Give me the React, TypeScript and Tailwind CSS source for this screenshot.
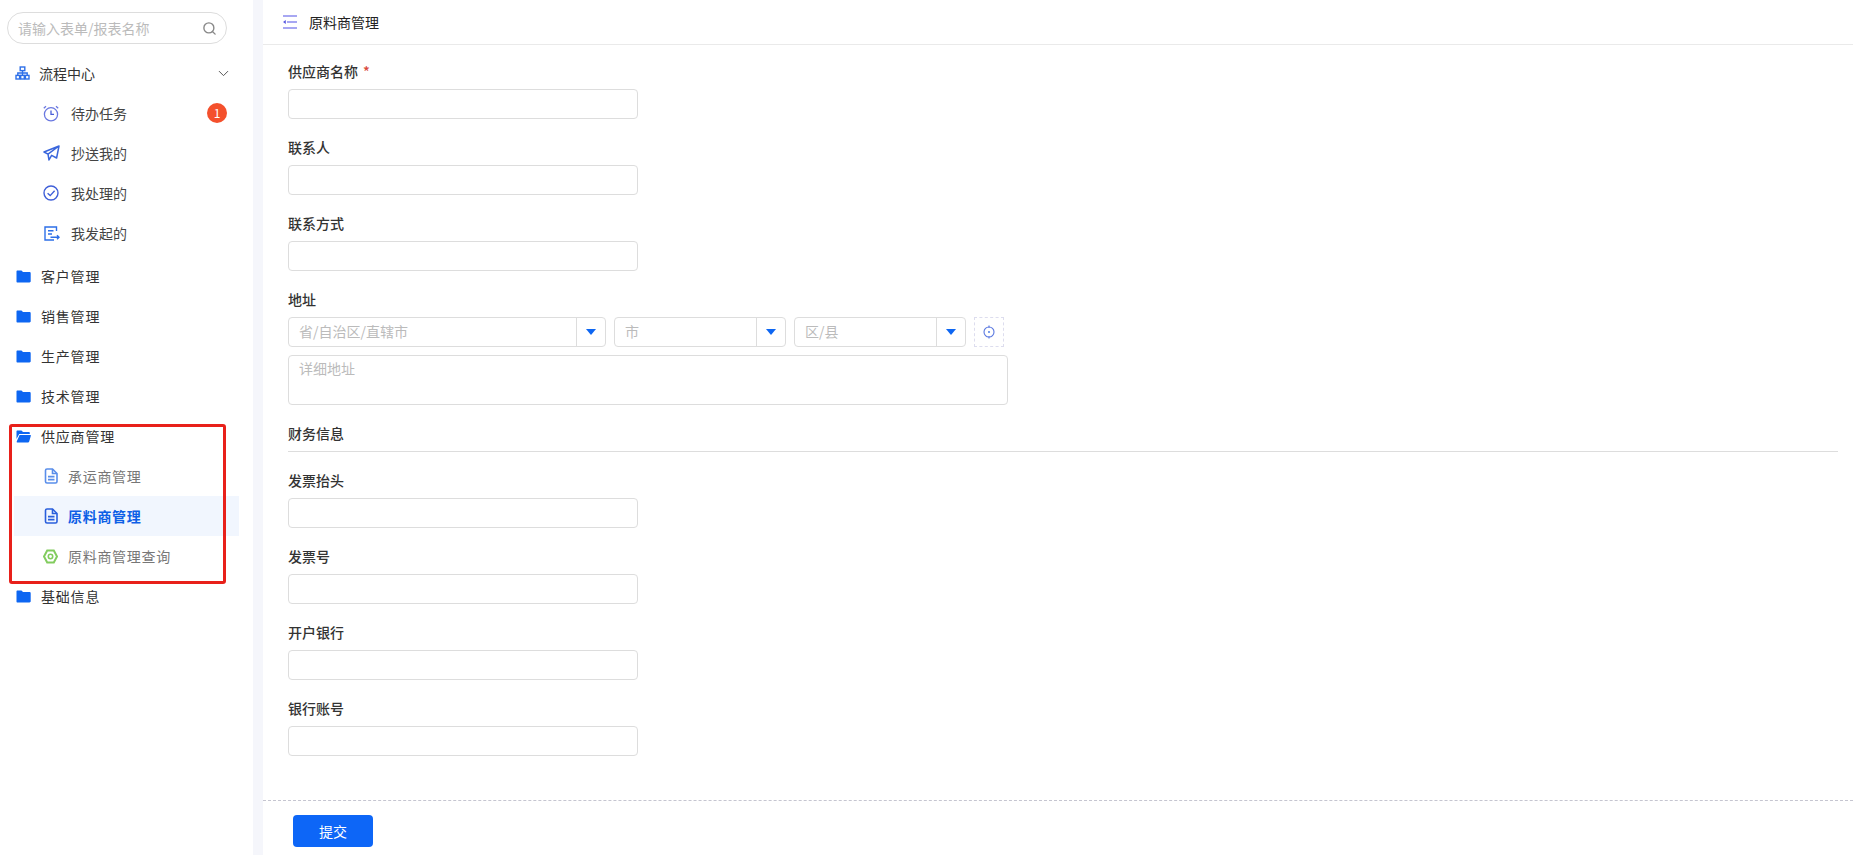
import { ChevronDown, Search } from 'lucide-react';
import type { ReactNode } from 'react';

const font = { fontFamily: '"Noto Sans CJK SC", "Liberation Sans", sans-serif' };

const FolderIcon = () => (
  <svg width="15" height="13" viewBox="0 0 15 13" className="shrink-0">
    <path d="M0.5 1.5C0.5 .9 .9 .5 1.5 .5H5.5L7 2H13.5C14.2 2 14.7 2.5 14.7 3.2V11.3C14.7 12 14.2 12.5 13.5 12.5H1.5C.9 12.5 .5 12 .5 11.4Z" fill="#0d66f2" />
  </svg>
);

const FolderOpenIcon = () => (
  <svg width="15" height="13" viewBox="0 0 15 13" className="shrink-0">
    <path d="M0.5 1.5C0.5 .9 .9 .5 1.5 .5H5.5L7 2H12.8C13.4 2 13.8 2.4 13.8 3V4H3.2L.5 9Z" fill="#0d66f2" />
    <path d="M3.6 5H14.2C14.8 5 15 5.4 14.8 5.9L13.2 11.6C13 12.2 12.6 12.5 12 12.5H1.2C.7 12.5 .5 12.2 .7 11.6Z" fill="#0d66f2" />
  </svg>
);

const OrgIcon = () => (
  <svg width="15" height="14" viewBox="0 0 15 14" fill="none" stroke="#2d6fe8" strokeWidth="1.4" className="shrink-0 -ml-px">
    <rect x="5.2" y="1" width="4.6" height="3.6" />
    <rect x="1" y="9.4" width="3.6" height="3.6" />
    <rect x="5.7" y="9.4" width="3.6" height="3.6" />
    <rect x="10.4" y="9.4" width="3.6" height="3.6" />
    <path d="M7.5 4.6V9.4M2.8 9.4V7H12.2V9.4" />
  </svg>
);

const ClockIcon = () => (
  <svg width="16" height="17" viewBox="0 0 16 17" fill="none" stroke="#6a78e0" strokeWidth="1.3" className="shrink-0">
    <circle cx="8" cy="9.3" r="6.6" />
    <path d="M8 5.6V9.4H11" stroke="#4a5fd8" strokeWidth="1.3" />
    <path d="M.8 3.2L3 1.2M15.2 3.2L13 1.2" />
  </svg>
);

const SendIcon = () => (
  <svg width="17" height="16" viewBox="0 0 17 16" fill="none" stroke="#3a66dc" strokeWidth="1.5" strokeLinejoin="round" className="shrink-0">
    <path d="M16 1L1 7L5 9.2L16 1L13.6 13L8.6 10.4L6 15L5 9.2" />
  </svg>
);

const CheckCircleIcon = () => (
  <svg width="16" height="16" viewBox="0 0 16 16" fill="none" stroke="#3f5fd8" strokeWidth="1.4" className="shrink-0">
    <circle cx="8" cy="8" r="7" />
    <path d="M4.6 8.2L7.2 10.6L11.6 5.8" />
  </svg>
);

const ListOutIcon = () => (
  <svg width="16" height="15" viewBox="0 0 16 15" fill="none" stroke="#2d6fe8" strokeWidth="1.4" className="shrink-0 ml-px">
    <path d="M12.5 5V1H1V14H10" />
    <path d="M4 4.8H9.5M4 8H8M6.5 11.3H15M13 9.3L15 11.3L13 13.3" />
  </svg>
);

const DocIcon = ({ dark }: { dark?: boolean }) => (
  <svg width="14" height="16" viewBox="0 0 14 16" fill="none" stroke={dark ? '#2a5fdc' : '#5a8eea'} strokeWidth="1.6" className="shrink-0">
    <path d="M1.5 2.5C1.5 1.5 2 1 3 1H8.5L13 5.5V13.5C13 14.5 12.5 15 11.5 15H3C2 15 1.5 14.5 1.5 13.5Z" />
    <path d="M8.5 1V5.5H13M4 8.6H10.5M4 11.6H10.5" />
  </svg>
);

const HexIcon = () => (
  <svg width="15" height="15" viewBox="0 0 15 15" fill="none" stroke="#82cc5e" strokeWidth="2" className="shrink-0 -ml-px">
    <path d="M4.2 1.5H10.8L14 7.5L10.8 13.5H4.2L1 7.5Z" />
    <circle cx="7.5" cy="7.5" r="2.2" strokeWidth="1.6" />
  </svg>
);

const MenuFoldIcon = () => (
  <svg width="14" height="14" viewBox="0 0 14 14" fill="none" stroke="#8b8bee" strokeWidth="1.4">
    <path d="M0 1H14M4 7H14M0 13H14" />
    <path d="M2.8 5L0 7L2.8 9Z" fill="#5a5ae0" stroke="none" />
  </svg>
);

const LocateIcon = () => (
  <svg width="14" height="16" viewBox="0 0 14 16" fill="none" stroke="#5a78e0" strokeWidth="1.1">
    <circle cx="7" cy="8" r="5" />
    <circle cx="7" cy="8" r="0.9" fill="#3f6fe0" stroke="none" />
    <path d="M7 1.5V3.8M7 12.2V14.5" />
  </svg>
);

const Top = ({ icon, label, open, wide }: { icon: ReactNode; label: string; open?: boolean; wide?: boolean }) => (
  <div className={`h-10 flex items-center pl-4 text-sm text-[#333] ${wide ? 'tracking-[0.8px]' : ''}`}>
    <span className={`${wide ? 'w-[25px]' : 'w-[23px]'} shrink-0 flex`}>{icon}</span>
    {label}
    {open && <ChevronDown className="ml-auto mr-[21px] text-[#555]" size={17} strokeWidth={1.4} />}
  </div>
);

const Task = ({ icon, label, badge }: { icon: ReactNode; label: string; badge?: number }) => (
  <div className="h-10 flex items-center pl-[43px] text-sm text-[#444]">
    <span className="w-7 shrink-0 flex">{icon}</span>
    {label}
    {badge && (
      <span className="ml-auto mr-[26px] w-5 h-5 rounded-full bg-[#f4502c] text-white text-xs flex items-center justify-center">
        {badge}
      </span>
    )}
  </div>
);

const Leaf = ({ icon, label, active }: { icon: ReactNode; label: string; active?: boolean }) => (
  <div
    className={`h-10 ml-[14px] w-[225px] flex items-center pl-[30px] text-sm tracking-[0.7px] ${
      active ? 'bg-[#f1f6fe] text-[#0d5fe6] font-bold' : 'text-[#777]'
    }`}
  >
    <span className="w-[24px] shrink-0 flex">{icon}</span>
    {label}
  </div>
);

const Field = ({ label, required }: { label: string; required?: boolean }) => (
  <div className="mb-[18px]">
    <div className="h-5 leading-5 mb-2 text-sm font-medium text-[#333]">
      {label}
      {required && <span className="ml-[5px] text-[#d9493a]">*</span>}
    </div>
    <div className="w-[350px] h-[30px] border border-[#ddd] rounded-sm bg-white" />
  </div>
);

const Select = ({ placeholder, width }: { placeholder: string; width: string }) => (
  <div className={`${width} h-[30px] border border-[#ddd] rounded-sm flex items-center`}>
    <span className="flex-1 pl-[10px] pb-[2px] text-sm text-[#bbb]">{placeholder}</span>
    <span className="w-[29px] h-full border-l border-[#ddd] flex items-center justify-center">
      <span className="w-0 h-0 border-x-[5px] border-x-transparent border-t-[6px] border-t-[#0d66f2]" />
    </span>
  </div>
);

export default function App() {
  return (
    <div className="w-[1853px] h-[855px] overflow-hidden flex bg-[#f5f6fb]" style={font}>
      <aside className="w-[253px] h-full bg-white shrink-0 relative">
        <div className="mt-3 ml-[7px] w-[220px] h-[32px] border border-[#ddd] rounded-full flex items-center pl-[10px] pr-[9px] text-sm text-[#bbb]">
          请输入表单/报表名称
          <Search className="ml-auto text-[#888]" size={15} strokeWidth={2.2} />
        </div>
        <div className="mt-[9px]">
          <Top icon={<OrgIcon />} label="流程中心" open />
          <Task icon={<ClockIcon />} label="待办任务" badge={1} />
          <Task icon={<SendIcon />} label="抄送我的" />
          <Task icon={<CheckCircleIcon />} label="我处理的" />
          <Task icon={<ListOutIcon />} label="我发起的" />
          <div className="h-[3px]" />
          <Top icon={<FolderIcon />} label="客户管理" wide />
          <Top icon={<FolderIcon />} label="销售管理" wide />
          <Top icon={<FolderIcon />} label="生产管理" wide />
          <Top icon={<FolderIcon />} label="技术管理" wide />
          <Top icon={<FolderOpenIcon />} label="供应商管理" wide />
          <Leaf icon={<DocIcon />} label="承运商管理" />
          <Leaf icon={<DocIcon dark />} label="原料商管理" active />
          <Leaf icon={<HexIcon />} label="原料商管理查询" />
          <Top icon={<FolderIcon />} label="基础信息" wide />
        </div>
        {/* red annotation box drawn over the menu */}
        <div className="absolute left-[9px] top-[424px] w-[217px] h-[160px] border-[3px] border-[#e8201a] rounded-[3px]" />
      </aside>

      <main className="ml-[10px] flex-1 h-full bg-white flex flex-col">
        <header className="h-[45px] shrink-0 border-b border-[#eaeaea] flex items-center pl-5 text-sm text-[#222]">
          <MenuFoldIcon />
          <span className="ml-3">原料商管理</span>
        </header>

        <div className="pt-4 pl-[25px] pr-[15px] h-[756px] shrink-0 border-b border-dashed border-[#c5c5d0]">
          <Field label="供应商名称" required />
          <Field label="联系人" />
          <Field label="联系方式" />

          <div className="h-5 leading-5 mb-2 text-sm font-medium text-[#333]">地址</div>
          <div className="flex gap-2">
            <Select placeholder="省/自治区/直辖市" width="w-[318px]" />
            <Select placeholder="市" width="w-[172px]" />
            <Select placeholder="区/县" width="w-[172px]" />
            <div className="w-[30px] h-[30px] border border-dashed border-[#dde] flex items-center justify-center">
              <LocateIcon />
            </div>
          </div>
          <div className="mt-2 w-[720px] h-[50px] border border-[#ddd] rounded-sm px-[10px] py-[2px] text-sm text-[#bbb]">
            详细地址
          </div>

          <div className="mt-[18px] h-[29px] leading-5 border-b border-[#ddd] text-sm font-medium text-[#333]">财务信息</div>
          <div className="h-[18px]" />
          <Field label="发票抬头" />
          <Field label="发票号" />
          <Field label="开户银行" />
          <Field label="银行账号" />
        </div>

        <div className="pt-[14px] pl-[30px]">
          <button className="w-20 h-8 rounded bg-[#0d66f7] text-white text-sm">提交</button>
        </div>
      </main>
    </div>
  );
}
